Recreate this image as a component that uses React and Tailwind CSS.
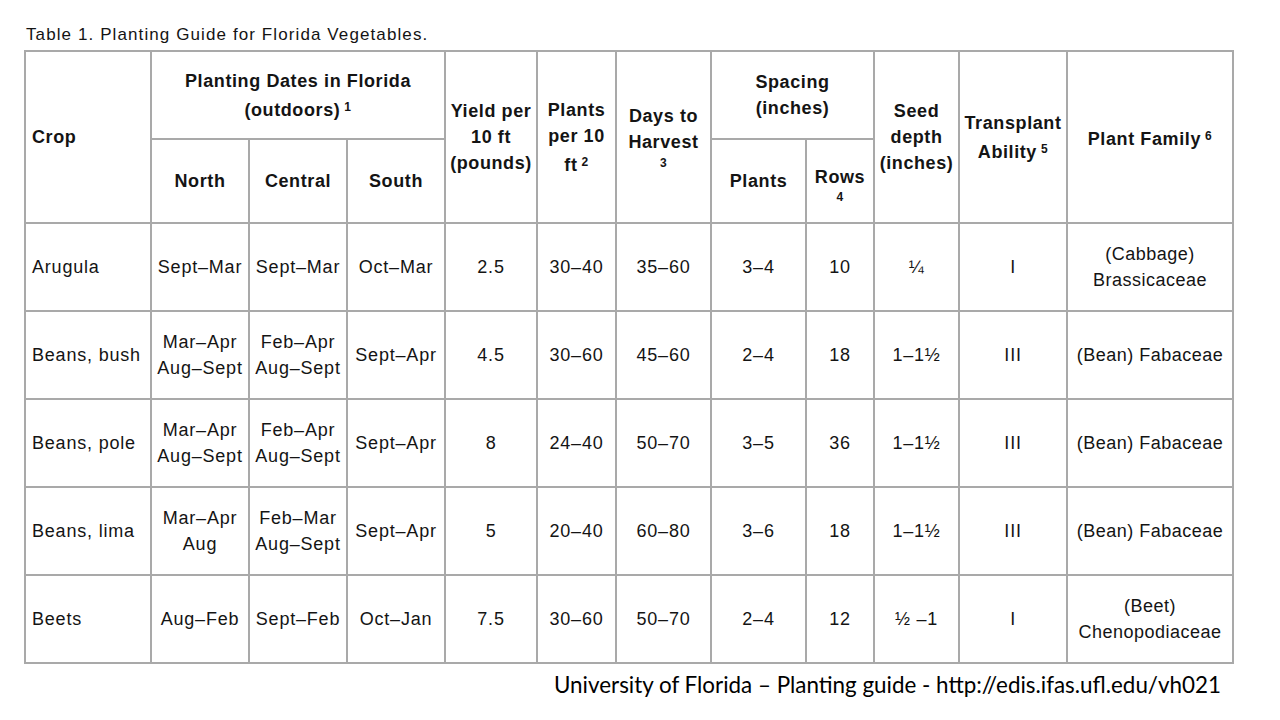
const rows = [
  { crop: "Arugula", north: ["Sept–Mar"], central: ["Sept–Mar"], south: "Oct–Mar", yld: "2.5", plants10: "30–40", days: "35–60", sp: "3–4", rows: "10", seed: "¼", tr: "I", fam: ["(Cabbage)", "Brassicaceae"] },
  { crop: "Beans, bush", north: ["Mar–Apr", "Aug–Sept"], central: ["Feb–Apr", "Aug–Sept"], south: "Sept–Apr", yld: "4.5", plants10: "30–60", days: "45–60", sp: "2–4", rows: "18", seed: "1–1½", tr: "III", fam: ["(Bean) Fabaceae"] },
  { crop: "Beans, pole", north: ["Mar–Apr", "Aug–Sept"], central: ["Feb–Apr", "Aug–Sept"], south: "Sept–Apr", yld: "8", plants10: "24–40", days: "50–70", sp: "3–5", rows: "36", seed: "1–1½", tr: "III", fam: ["(Bean) Fabaceae"] },
  { crop: "Beans, lima", north: ["Mar–Apr", "Aug"], central: ["Feb–Mar", "Aug–Sept"], south: "Sept–Apr", yld: "5", plants10: "20–40", days: "60–80", sp: "3–6", rows: "18", seed: "1–1½", tr: "III", fam: ["(Bean) Fabaceae"] },
  { crop: "Beets", north: ["Aug–Feb"], central: ["Sept–Feb"], south: "Oct–Jan", yld: "7.5", plants10: "30–60", days: "50–70", sp: "2–4", rows: "12", seed: "½ –1", tr: "I", fam: ["(Beet)", "Chenopodiaceae"] },
];

const cell = "border-2 border-[#a9a9a9] text-center align-middle p-0";
const head = cell + " font-bold tracking-[0.6px]";

function Lines({ items }) {
  return items.map((t, i) => (
    <div key={i}>{t}</div>
  ));
}

function Sup({ n }) {
  return <span className="text-[12px] align-[5px] ml-[4px]">{n}</span>;
}

export default function App() {
  return (
    <div className="w-[1280px] h-[720px] bg-white text-[#141414] font-['Liberation_Sans',Arial,sans-serif] relative overflow-hidden">
      <div className="pl-[26px] pt-[25px] text-[17px] leading-[20px] tracking-[1.1px]">
        Table 1. Planting Guide for Florida Vegetables.
      </div>

      <table className="ml-[24px] mt-[5px] border-collapse table-fixed w-[1210px] text-[18px] leading-[26px]">
        <colgroup>
          <col className="w-[126px]" />
          <col className="w-[98px]" />
          <col className="w-[98px]" />
          <col className="w-[98px]" />
          <col className="w-[92px]" />
          <col className="w-[79px]" />
          <col className="w-[95px]" />
          <col className="w-[95px]" />
          <col className="w-[68px]" />
          <col className="w-[85px]" />
          <col className="w-[108px]" />
          <col className="w-[166px]" />
        </colgroup>
        <thead>
          <tr className="h-[88px]">
            <th rowSpan={2} className={head + " text-left pl-[6px]"}>Crop</th>
            <th colSpan={3} className={head}>
              <div>Planting Dates in Florida</div>
              <div>(outdoors)<Sup n="1" /></div>
            </th>
            <th rowSpan={2} className={head}>
              <div>Yield per</div>
              <div>10 ft</div>
              <div>(pounds)</div>
            </th>
            <th rowSpan={2} className={head}>
              <div>Plants</div>
              <div>per 10</div>
              <div>ft<Sup n="2" /></div>
            </th>
            <th rowSpan={2} className={head}>
              <div>Days to</div>
              <div>Harvest</div>
              <div className="text-[12px] leading-[16px]">3</div>
            </th>
            <th colSpan={2} className={head}>
              <div>Spacing</div>
              <div>(inches)</div>
            </th>
            <th rowSpan={2} className={head}>
              <div>Seed</div>
              <div>depth</div>
              <div>(inches)</div>
            </th>
            <th rowSpan={2} className={head}>
              <div>Transplant</div>
              <div>Ability<Sup n="5" /></div>
            </th>
            <th rowSpan={2} className={head}>
              Plant Family<Sup n="6" />
            </th>
          </tr>
          <tr className="h-[84px]">
            <th className={head}>North</th>
            <th className={head}>Central</th>
            <th className={head}>South</th>
            <th className={head}>Plants</th>
            <th className={head}>
              <div className="pt-[6px]">Rows</div>
              <div className="text-[12px] leading-[14px]">4</div>
            </th>
          </tr>
        </thead>
        <tbody className="tracking-[0.8px]">
          {rows.map((r) => (
            <tr key={r.crop} className="h-[88px]">
              <td className={cell + " text-left pl-[6px]"}>{r.crop}</td>
              <td className={cell}><Lines items={r.north} /></td>
              <td className={cell}><Lines items={r.central} /></td>
              <td className={cell}>{r.south}</td>
              <td className={cell}>{r.yld}</td>
              <td className={cell}>{r.plants10}</td>
              <td className={cell}>{r.days}</td>
              <td className={cell}>{r.sp}</td>
              <td className={cell}>{r.rows}</td>
              <td className={cell}>{r.seed}</td>
              <td className={cell}>{r.tr}</td>
              <td className={cell + " tracking-[0.5px]"}><Lines items={r.fam} /></td>
            </tr>
          ))}
        </tbody>
      </table>

      <div className="flex justify-end pr-[59px] mt-[7px]">
        <p className="font-['Lato','Open_Sans',sans-serif] text-[22.4px] leading-[28px] text-black">
          University of Florida – Planting guide - http://edis.ifas.ufl.edu/vh021
        </p>
      </div>
    </div>
  );
}
